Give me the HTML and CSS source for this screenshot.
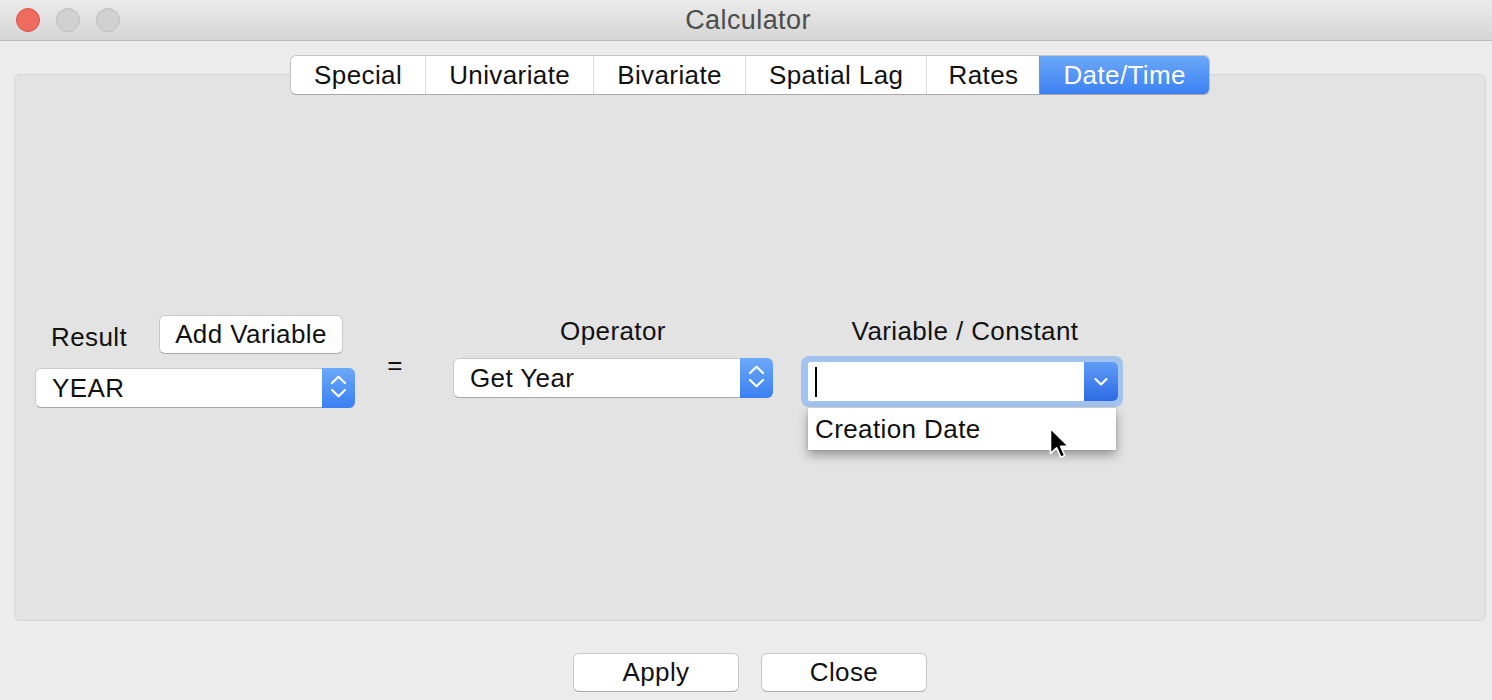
FILE: index.html
```html
<!DOCTYPE html>
<html>
<head>
<meta charset="utf-8">
<title>Calculator</title>
<link rel="stylesheet" href="styles.css">
</head>
<body>
<div class="window">
  <div class="titlebar">
    <div class="lights">
      <span class="light red"></span>
      <span class="light"></span>
      <span class="light"></span>
    </div>
    <div class="title">Calculator</div>
    <div></div>
  </div>
  <div class="content">
    <div class="tabs">
      <div class="tab">Special</div>
      <div class="tab">Univariate</div>
      <div class="tab">Bivariate</div>
      <div class="tab">Spatial Lag</div>
      <div class="tab tab-narrow">Rates</div>
      <div class="tab active">Date/Time</div>
    </div>
    <div class="panel">
      <div class="form">
        <div class="col-result">
          <div class="result-head">
            <span class="label result-label">Result</span>
            <div class="btn add-btn">Add Variable</div>
          </div>
          <div class="select result-select">
            <span class="value">YEAR</span>
            <span class="stepper">
              <svg width="33" height="40" viewBox="0 0 33 40"><path d="M10 15 L16.5 8.7 L23 15 M10 22 L16.5 28.3 L23 22" fill="none" stroke="#fff" stroke-width="2.2" stroke-linecap="round" stroke-linejoin="round"/></svg>
            </span>
          </div>
        </div>
        <div class="equals">=</div>
        <div class="col-op">
          <div class="label col-label">Operator</div>
          <div class="select op-select">
            <span class="value">Get Year</span>
            <span class="stepper">
              <svg width="33" height="40" viewBox="0 0 33 40"><path d="M10 15 L16.5 8.7 L23 15 M10 22 L16.5 28.3 L23 22" fill="none" stroke="#fff" stroke-width="2.2" stroke-linecap="round" stroke-linejoin="round"/></svg>
            </span>
          </div>
        </div>
        <div class="col-var">
          <div class="label col-label var-label">Variable / Constant</div>
          <div class="combo-ring">
            <div class="combo">
              <span class="combo-input"><span class="caret"></span></span>
              <span class="combo-btn">
                <svg width="34" height="39" viewBox="0 0 34 39"><path d="M11.5 17 L17 22.5 L22.5 17" fill="none" stroke="#fff" stroke-width="2.2" stroke-linecap="round" stroke-linejoin="round"/></svg>
              </span>
            </div>
            <div class="dropdown">
              <div class="dropdown-item">Creation Date</div>
              <svg class="cursor" width="23" height="34" viewBox="0 0 23 34"><path d="M1.5 1.5 L1.5 26.5 L7.6 20.8 L11.8 30.2 L15.7 28.5 L11.6 19.4 L19.6 19.4 Z" fill="#000" stroke="#fff" stroke-width="1.6" stroke-linejoin="round"/></svg>
            </div>
          </div>
        </div>
      </div>
    </div>
    <div class="footer">
      <div class="btn footer-btn">Apply</div>
      <div class="btn footer-btn">Close</div>
    </div>
  </div>
</div>
</body>
</html>
```
FILE: styles.css
```css
* { box-sizing: border-box; }
html, body { margin: 0; padding: 0; }
body {
  width: 1492px;
  height: 700px;
  overflow: hidden;
  background: #ececec;
  font-family: "Liberation Sans", Arial, sans-serif;
  font-size: 26px;
  letter-spacing: 0.4px;
  color: #111;
}
.window { width: 1492px; height: 700px; background: #ececec; }

.titlebar {
  height: 41px;
  display: grid;
  grid-template-columns: 1fr auto 1fr;
  align-items: center;
  background: linear-gradient(#ebebeb, #d5d5d5);
  border-bottom: 1px solid #b9b9b9;
}
.lights { display: flex; gap: 16px; padding-left: 16px; }
.light {
  width: 24px; height: 24px; border-radius: 50%;
  background: #d1d1d1;
  border: 1px solid #bcbcbc;
}
.light.red { background: #ee6b60; border-color: #d8564b; }
.title {
  color: #4d4d4d;
  font-size: 27px;
  padding-left: 4px;
  line-height: 40px;
}

.content {
  padding: 0 6px 0 14px;
  display: flex;
  flex-direction: column;
  align-items: center;
}

.tabs {
  margin-top: 14px;
  display: flex;
  height: 40px;
  background: #fff;
  border: 1px solid #c3c3c3;
  border-bottom-color: #a9a9a9;
  border-radius: 6px;
  overflow: hidden;
  position: relative;
  z-index: 1;
}
.tab {
  padding: 0 23px;
  line-height: 38px;
  border-left: 1px solid #dadada;
  color: #111;
}
.tab:first-child { border-left: none; }
.tab.tab-narrow { padding: 0 21px; }
.tab.active {
  background: linear-gradient(#6ca8f8, #3b81f3);
  color: #fff;
  border-left-color: #5d9af5;
}

.panel {
  align-self: stretch;
  margin-top: -21px;
  height: 547px;
  background: #e3e3e3;
  border: 1px solid #d6d6d6;
  border-radius: 6px;
  padding: 240px 0 0 20px;
}
.form { display: flex; align-items: flex-start; }

.label { color: #111; }

.col-result { width: 320px; }
.result-head {
  display: flex;
  justify-content: space-between;
  align-items: center;
  height: 39px;
}
.result-label { padding-left: 16px; margin-top: 5px; }
.btn {
  background: #fff;
  border: 1px solid #c8c8c8;
  border-bottom-color: #a8a8a8;
  border-radius: 6px;
  text-align: center;
  height: 39px;
  line-height: 37px;
  color: #111;
}
.add-btn { width: 184px; margin-right: 12px; }

.select {
  display: flex;
  height: 40px;
  background: #fff;
  border: 1px solid #c8c8c8;
  border-bottom-color: #a6a6a6;
  border-radius: 6px;
}
.result-select { margin-top: 14px; }
.select .value { flex: 1; padding-left: 16px; line-height: 38px; }
.stepper {
  width: 33px;
  margin: -1px -1px -1px 0;
  border-radius: 0 6px 6px 0;
  background: linear-gradient(#6ba9f9, #3a7ff2);
  display: flex;
}

.equals {
  width: 30px;
  margin-left: 25px;
  margin-top: 35px;
  text-align: center;
  line-height: 30px;
}

.col-op { width: 320px; margin-left: 43px; margin-top: 1px; }
.col-label { line-height: 30px; text-align: center; }
.op-select { margin-top: 12px; }

.col-var { width: 322px; margin-left: 28px; margin-top: 1px; }
.var-label { padding-left: 6px; }
.combo-ring {
  position: relative;
  margin-top: 10px;
  padding: 6px 5px 6px 7px;
  background: #a3c3ef;
  border-radius: 8px;
}
.combo {
  display: flex;
  height: 39px;
  background: #fff;
  border-radius: 2px 5px 5px 2px;
}
.combo-input { flex: 1; display: flex; align-items: center; padding-left: 7px; }
.caret { width: 2px; height: 30px; background: #000; }
.combo-btn {
  width: 34px;
  display: flex;
  border-radius: 0 5px 5px 0;
  background: linear-gradient(#5f9cf6, #2c6be5);
}

.dropdown {
  position: absolute;
  left: 7px;
  top: 52px;
  width: 308px;
  height: 42px;
  background: #fff;
  box-shadow: 0 5px 10px rgba(0,0,0,0.35), 0 0 1px rgba(0,0,0,0.3);
  z-index: 2;
}
.dropdown-item { padding-left: 7px; line-height: 42px; }
.cursor { position: absolute; left: 241px; top: 19px; }

.footer {
  margin-top: 32px;
  display: flex;
  gap: 22px;
}
.footer-btn { width: 166px; }
```
